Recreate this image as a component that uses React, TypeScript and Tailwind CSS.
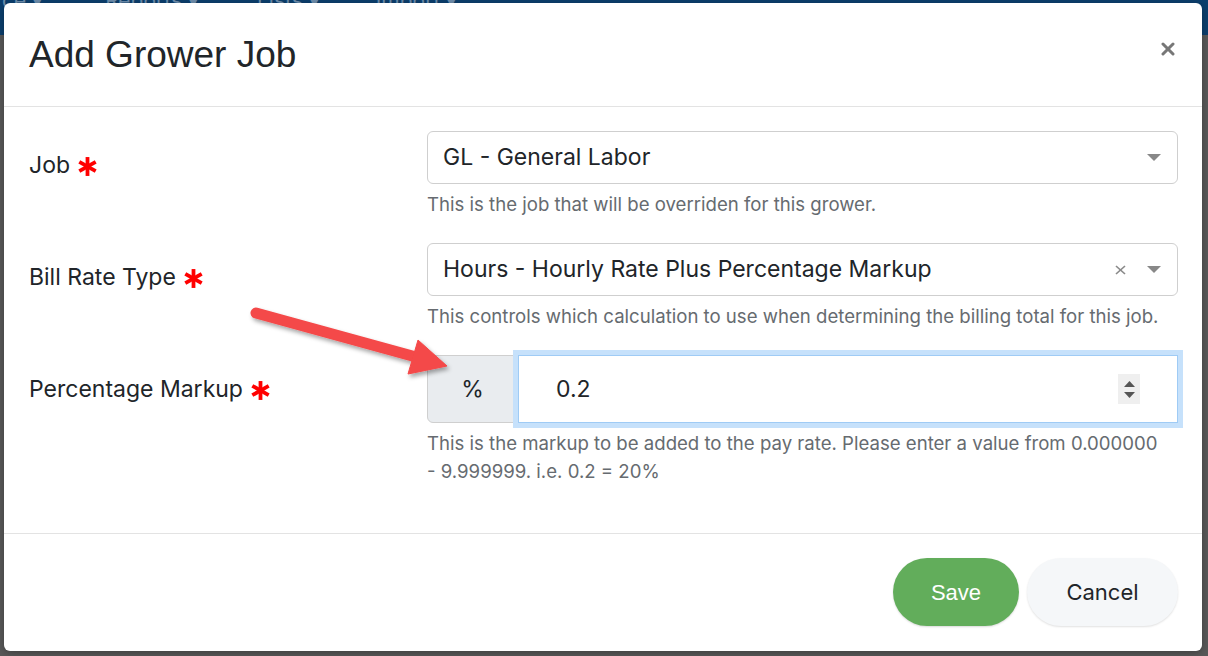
import React from "react";

const sans = { fontFamily: '"Inter", "Noto Sans", sans-serif' } as React.CSSProperties;

function Asterisk() {
  return (
    <svg width="21" height="21" viewBox="0 0 20 20" className="ml-[7px] shrink-0 mt-[2px]">
      <g stroke="#ff0000" strokeWidth="3.6" strokeLinecap="butt">
        <line x1="10" y1="1" x2="10" y2="19" />
        <line x1="2.2" y1="5.5" x2="17.8" y2="14.5" />
        <line x1="2.2" y1="14.5" x2="17.8" y2="5.5" />
      </g>
    </svg>
  );
}

function Caret() {
  return (
    <svg width="14" height="8" viewBox="0 0 14 8">
      <path d="M0 0 H14 L7 7 Z" fill="#888888" />
    </svg>
  );
}

function Row({
  label,
  children,
  help,
}: {
  label: string;
  children: React.ReactNode;
  help: React.ReactNode;
}) {
  return (
    <div className="flex">
      <div className="w-[398px] shrink-0 pt-[16px] flex items-center h-[52px]">
        <span className="text-[23px] leading-[34px] text-[#212529]">{label}</span>
        <Asterisk />
      </div>
      <div className="w-[751px] shrink-0">
        {children}
        <div className="mt-[6px] text-[18.6px] leading-[28px] text-[#666b70]">{help}</div>
      </div>
    </div>
  );
}

export default function App() {
  return (
    <div className="relative w-[1208px] h-[656px] overflow-hidden bg-[#595959]" style={sans}>
      {/* backdrop page */}
      <div className="h-[50px] bg-[#0c3f6d] flex items-start -mt-[15px] text-[21px] text-[#6f8fae]">
        <span className="ml-[2px]">ce ▾</span>
        <span className="ml-[62px]">Reports ▾</span>
        <span className="ml-[58px]">Lists ▾</span>
        <span className="ml-[56px]">Import ▾</span>
      </div>

      {/* modal */}
      <div className="absolute left-[4px] top-[3px] w-[1198px] h-[648px] bg-white rounded-[6px] flex flex-col shadow-[0_2px_8px_rgba(0,0,0,0.3)]">
        <div className="h-[104px] shrink-0 border-b border-[#e3e3e3] flex items-center justify-between pl-[25px] pr-[27px]">
          <h1
            className="text-[37px] text-[#212529] leading-none -mt-[1px]"
            style={{ fontFamily: '"Liberation Sans", Arial, sans-serif' }}
          >
            Add Grower Job
          </h1>
          <svg width="14" height="14" viewBox="0 0 14 14" className="-mt-[12px]">
            <g stroke="#777777" strokeWidth="3" strokeLinecap="round">
              <line x1="2" y1="2" x2="12" y2="12" />
              <line x1="12" y1="2" x2="2" y2="12" />
            </g>
          </svg>
        </div>

        <div className="flex-1 pt-[24px] pl-[25px] flex flex-col gap-[25px]">
          <Row label="Job" help="This is the job that will be overriden for this grower.">
            <div className="h-[53px] border border-[#cfcfcf] rounded-[6px] flex items-center pl-[15px] pr-[16px]">
              <span className="flex-1 text-[23px] text-[#212529]">GL - General Labor</span>
              <Caret />
            </div>
          </Row>

          <Row
            label="Bill Rate Type"
            help="This controls which calculation to use when determining the billing total for this job."
          >
            <div className="h-[53px] border border-[#cfcfcf] rounded-[6px] flex items-center pl-[15px] pr-[16px]">
              <span className="flex-1 text-[23px] text-[#212529]">
                Hours - Hourly Rate Plus Percentage Markup
              </span>
              <svg width="11" height="10" viewBox="0 0 11 10" className="mr-[21px]">
                <g stroke="#8a8a8a" strokeWidth="1.6">
                  <line x1="1" y1="1" x2="10" y2="9" />
                  <line x1="10" y1="1" x2="1" y2="9" />
                </g>
              </svg>
              <Caret />
            </div>
          </Row>

          <Row
            label="Percentage Markup"
            help={
              <>
                This is the markup to be added to the pay rate. Please enter a value from 0.000000
                <br />- 9.999999. i.e. 0.2 = 20%
              </>
            }
          >
            <div className="flex h-[68px]">
              <div className="w-[91px] shrink-0 bg-[#e9ecef] border border-[#cfcfcf] rounded-l-[6px] flex items-center justify-center text-[23px] text-[#212529]">
                %
              </div>
              <div className="flex-1 border border-[#9fcbf5] shadow-[0_0_0_5px_#c6e1fb] flex items-center pl-[37px] pr-[37px] relative z-10">
                <span className="flex-1 text-[23px] text-[#212529]">0.2</span>
                <div className="w-[22px] h-[30px] bg-[#efefef] flex flex-col items-center justify-center gap-[5px]">
                  <svg width="11" height="6" viewBox="0 0 11 6">
                    <path d="M0 6 L5.5 0 L11 6 Z" fill="#555" />
                  </svg>
                  <svg width="11" height="6" viewBox="0 0 11 6">
                    <path d="M0 0 L11 0 L5.5 6 Z" fill="#555" />
                  </svg>
                </div>
              </div>
            </div>
          </Row>
        </div>

        <div className="h-[118px] shrink-0 border-t border-[#e3e3e3] flex items-start justify-end gap-[8px] pt-[24px] pr-[24px]">
          <button
            className="w-[126px] h-[68px] rounded-full bg-[#62ad5b] text-white text-[22px] shadow-[0_1px_2px_rgba(0,0,0,0.15)]"
            style={{ fontFamily: '"Liberation Sans", Arial, sans-serif' }}
          >
            Save
          </button>
          <button className="w-[151px] h-[68px] rounded-full bg-[#f5f7f9] text-[#212529] text-[22px] shadow-[0_1px_2px_rgba(0,0,0,0.12)]">
            Cancel
          </button>
        </div>
      </div>

      {/* annotation arrow */}
      <svg className="absolute left-0 top-0 pointer-events-none" width="1208" height="656">
        <defs>
          <filter id="sh" x="-20%" y="-50%" width="140%" height="200%">
            <feDropShadow dx="2" dy="3" stdDeviation="2" floodColor="#000" floodOpacity="0.35" />
          </filter>
        </defs>
        <g filter="url(#sh)" fill="#f44848" stroke="#f44848">
          <line x1="256" y1="313" x2="416" y2="357" strokeWidth="11" strokeLinecap="round" />
          <polygon points="447,366 408,374 418,340" strokeWidth="1" strokeLinejoin="round" />
        </g>
      </svg>
    </div>
  );
}
